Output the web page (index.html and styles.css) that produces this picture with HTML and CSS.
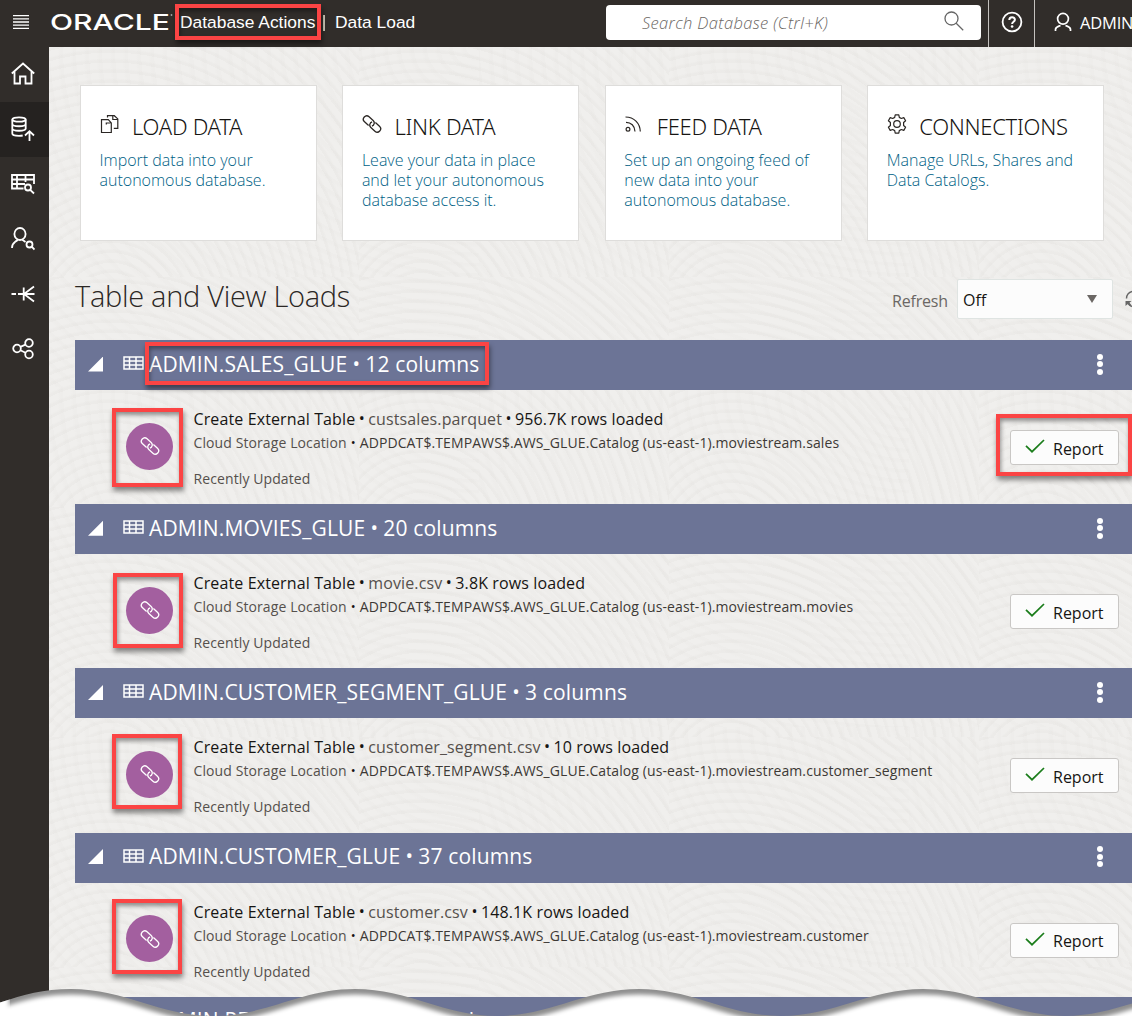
FILE: index.html
```
<!DOCTYPE html>
<html lang="en">
<head>
<meta charset="utf-8">
<title>Database Actions | Data Load</title>
<link rel="stylesheet" href="styles.css">
</head>
<body>
<svg width="0" height="0" class="defs" aria-hidden="true">
  <symbol id="link" viewBox="0 0 20 20"><g transform="rotate(42 10 10)" fill="none" stroke="currentColor" stroke-width="1.3"><path d="M8.500 13.400H3A3.400 3.400 0 0 1 3 6.600H8.500A3.400 3.400 0 0 1 11.400 11.700"/><path d="M11.500 6.600H17A3.400 3.400 0 0 1 17 13.400H11.500A3.400 3.400 0 0 1 8.600 8.300"/></g></symbol>
  <symbol id="table" viewBox="0 0 21 14"><path d="M1 1h19v12H1zM1 5h19M1 9h19M6.500 1v12M13 1v12" fill="none" stroke="currentColor" stroke-width="1.5"/></symbol>
  <symbol id="check" viewBox="0 0 20 14"><path d="M1 6.800 7 12.700 19 1" fill="none" stroke="currentColor" stroke-width="1.7"/></symbol>
</svg>
<div class="app">
  <header class="topbar">
    <svg class="menu" width="16" height="14" viewBox="0 0 16 14"><path d="M0 .7h16M0 3.800h16M0 7h16M0 10.200h16M0 13.300h16" stroke="#fff" stroke-width="1.3"/></svg>
    <svg class="logo" width="123" height="30" viewBox="0 0 123 30"><text x="-1" y="22.500" textLength="120" lengthAdjust="spacingAndGlyphs">ORACLE</text><circle cx="120.500" cy="8" r=".9"/></svg>
    <span class="product">Database Actions<span class="highlight h-product"></span></span>
    <span class="divider"></span>
    <span class="page">Data Load</span>
    <div class="search"><span>Search Database (Ctrl+K)</span>
      <svg width="20" height="20" viewBox="0 0 20 20"><g fill="none" stroke="#666" stroke-width="1.300"><circle cx="7.500" cy="7.500" r="6.500"/><path d="m12.200 12.200 7 7"/></g></svg>
    </div>
    <div class="help"><svg width="22" height="22" viewBox="0 0 22 22"><g fill="none" stroke="#fff" stroke-width="1.800"><circle cx="11" cy="11" r="9.400"/><path d="M8.300 9c0-3.600 5.600-3.600 5.600-.3 0 2-2.800 2-2.800 4.200" stroke-width="2"/></g><circle cx="11.100" cy="15.500" r="1.300" fill="#fff"/></svg></div>
    <div class="user"><svg width="18" height="20" viewBox="0 0 18 20"><g fill="none" stroke="#fff" stroke-width="1.700"><circle cx="9" cy="6.800" r="5.400"/><path d="M1.500 19v-1.500c0-2.500 2.500-3 5-4M16.500 19v-1.500c0-2.500-2.500-3-5-4"/></g></svg><span>ADMIN</span></div>
  </header>
  <div class="shell">
    <nav class="rail">
      <div class="item"><svg width="24" height="24" viewBox="0 0 24 24"><path d="M.8 11.500 12 1.500l11.200 10M3.500 9.500v12H9v-7h5.500v7h6v-12"/></svg></div>
      <div class="item active"><svg width="24" height="26" viewBox="0 0 24 26"><ellipse cx="8" cy="3.500" rx="6.700" ry="2.200"/><path d="M1.300 3.500v14c0 1.400 2.500 2.300 6.700 2.300 1.500 0 2.700-.1 3.700-.3M14.700 3.500V13M1.300 8c0 3 13.400 3 13.400 0M1.300 12.500c0 3 13.400 3 13.400 0M18.500 25v-9M14 19.500l4.500-4.300 4.500 4.300"/></svg></div>
      <div class="item"><svg width="24" height="22" viewBox="0 0 24 22"><path d="M12.500 15.500H1V2h22v9M1 6.500h22M1 11h13M6 2v13.500M14.500 2v7"/><circle cx="17" cy="14.500" r="3"/><path d="m19.200 16.800 3.800 3.700"/></svg></div>
      <div class="item"><svg width="24" height="24" viewBox="0 0 24 24"><ellipse cx="9" cy="7" rx="5.600" ry="6"/><path d="M1 21c0-5.500 2.500-5 6-8.500M11 12.500l3.500 2.500"/><circle cx="18.500" cy="17.500" r="3"/><path d="m20.700 19.700 2.800 2.800"/></svg></div>
      <div class="item"><svg width="24" height="18" viewBox="0 0 24 18"><path d="M.5 9H5M7 9h16.500M12.700 2.500v13M23 1.500 13 9l10 7.500"/></svg></div>
      <div class="item"><svg width="24" height="22" viewBox="0 0 24 22"><circle cx="6" cy="10.500" r="3.800"/><circle cx="18" cy="5" r="3.800"/><circle cx="18" cy="16.500" r="3.800"/><path d="m9.400 8.900 5.100-2.300M9.400 12.200l5.100 2.500"/></svg></div>
    </nav>
    <main class="main">
      <section class="cards">
        <article class="card"><h2><svg width="20" height="20" viewBox="0 0 20 20"><g fill="none" stroke="#2b2724" stroke-width="1.200"><path d="M1.500 5.700h6.800l3 3.200v9.600H1.500zM6.200 9h4.300M6.300 8.500v2"/><path d="M7.500 3.600V1.700h6.800l3.500 3.200v9.500h-4M12.800 2v3.500h4.600"/></g></svg>LOAD DATA</h2><p>Import data into your<br>autonomous database.</p></article>
        <article class="card"><h2><svg width="20" height="20"><use href="#link"/></svg>LINK DATA</h2><p>Leave your data in place<br>and let your autonomous<br>database access it.</p></article>
        <article class="card"><h2><svg width="20" height="20" viewBox="0 0 20 20"><g fill="none" stroke="#2b2724" stroke-width="1.200"><circle cx="4" cy="15.200" r="1.900"/><path d="M2 8.300c5 0 8.800 3.500 9 9.200M1.500 3C10 3 16 9 16.300 17.500"/></g></svg>FEED DATA</h2><p>Set up an ongoing feed of<br>new data into your<br>autonomous database.</p></article>
        <article class="card"><h2><svg width="20" height="20" viewBox="0 0 20 20"><g fill="none" stroke="#2b2724" stroke-width="1.200" stroke-linejoin="round"><circle cx="10" cy="10" r="3.300"/><path d="M8.200.8h3.600l.5 2.600 2 1.100 2.500-.9 1.800 3.100-2 1.800v3l2 1.800-1.800 3.100-2.500-.9-2 1.100-.5 2.600H8.200l-.5-2.600-2-1.100-2.500.9-1.800-3.100 2-1.800v-3l-2-1.800 1.800-3.100 2.500.9 2-1.100z"/></g></svg>CONNECTIONS</h2><p>Manage URLs, Shares and<br>Data Catalogs.</p></article>
      </section>
      <div class="heading">
        <h1>Table and View Loads</h1>
        <label>Refresh</label>
        <div class="select">Off<i></i></div>
        <svg class="reload" width="18" height="18" viewBox="0 0 18 18"><path d="M1.500 8.500a7.500 7.500 0 0 1 14-3.500M16.500 9.500a7.500 7.500 0 0 1-13.500 4" fill="none" stroke="#666" stroke-width="1.400"/><path d="M.5 11h6l-2 1.800 2 2.500-1.200 1.200-2.200-2.700L.5 16z" fill="#666"/></svg>
      </div>
      <section class="load">
        <header><i class="caret"></i><svg width="21" height="14"><use href="#table"/></svg><h3>ADMIN.SALES_GLUE<b>•</b>12 columns</h3><span class="highlight h-title"></span><span class="dots"><i></i><i></i><i></i></span></header>
        <div class="body"><div class="badge"><svg width="20" height="20"><use href="#link"/></svg><span class="highlight h-badge first"></span></div>
          <div class="info"><p class="main-line">Create External Table<b>•</b><em>custsales.parquet</em><b>•</b>956.7K rows loaded</p><p class="sub">Cloud Storage Location<b>•</b><strong>ADPDCAT$.TEMPAWS$.AWS_GLUE.Catalog (us-east-1).moviestream.sales</strong></p><p class="recent">Recently Updated</p></div>
          <button class="report"><svg width="20" height="14"><use href="#check"/></svg>Report<span class="highlight h-report"></span></button></div>
      </section>
      <section class="load">
        <header><i class="caret"></i><svg width="21" height="14"><use href="#table"/></svg><h3>ADMIN.MOVIES_GLUE<b>•</b>20 columns</h3><span class="dots"><i></i><i></i><i></i></span></header>
        <div class="body"><div class="badge"><svg width="20" height="20"><use href="#link"/></svg><span class="highlight h-badge second"></span></div>
          <div class="info"><p class="main-line">Create External Table<b>•</b><em>movie.csv</em><b>•</b>3.8K rows loaded</p><p class="sub">Cloud Storage Location<b>•</b><strong>ADPDCAT$.TEMPAWS$.AWS_GLUE.Catalog (us-east-1).moviestream.movies</strong></p><p class="recent">Recently Updated</p></div>
          <button class="report"><svg width="20" height="14"><use href="#check"/></svg>Report</button></div>
      </section>
      <section class="load">
        <header><i class="caret"></i><svg width="21" height="14"><use href="#table"/></svg><h3>ADMIN.CUSTOMER_SEGMENT_GLUE<b>•</b>3 columns</h3><span class="dots"><i></i><i></i><i></i></span></header>
        <div class="body"><div class="badge"><svg width="20" height="20"><use href="#link"/></svg><span class="highlight h-badge"></span></div>
          <div class="info"><p class="main-line">Create External Table<b>•</b><em>customer_segment.csv</em><b>•</b>10 rows loaded</p><p class="sub">Cloud Storage Location<b>•</b><strong>ADPDCAT$.TEMPAWS$.AWS_GLUE.Catalog (us-east-1).moviestream.customer_segment</strong></p><p class="recent">Recently Updated</p></div>
          <button class="report"><svg width="20" height="14"><use href="#check"/></svg>Report</button></div>
      </section>
      <section class="load">
        <header><i class="caret"></i><svg width="21" height="14"><use href="#table"/></svg><h3>ADMIN.CUSTOMER_GLUE<b>•</b>37 columns</h3><span class="dots"><i></i><i></i><i></i></span></header>
        <div class="body"><div class="badge"><svg width="20" height="20"><use href="#link"/></svg><span class="highlight h-badge"></span></div>
          <div class="info"><p class="main-line">Create External Table<b>•</b><em>customer.csv</em><b>•</b>148.1K rows loaded</p><p class="sub">Cloud Storage Location<b>•</b><strong>ADPDCAT$.TEMPAWS$.AWS_GLUE.Catalog (us-east-1).moviestream.customer</strong></p><p class="recent">Recently Updated</p></div>
          <button class="report"><svg width="20" height="14"><use href="#check"/></svg>Report</button></div>
      </section>
      <section class="load">
        <header><i class="caret"></i><svg width="21" height="14"><use href="#table"/></svg><h3>ADMIN.PERFORMER_GLUE<b>•</b>8 columns</h3></header>
      </section>
    </main>
  </div>
  <svg class="tear" width="1132" height="36" viewBox="0 0 1132 36">
    <defs>
      <path id="wave" d="M-8 25C20 16 40 9 71 9C125 9 160 36 213 36C266 36 301 9 355 9C409 9 444 36 497 36C550 36 585 9 639 9C693 9 728 36 781 36C834 36 869 9 923 9C977 9 1012 36 1065 36C1118 36 1153 9 1207 9V60H-8Z"/>
      <clipPath id="edge"><use href="#wave"/></clipPath>
      <filter id="soft" x="-5%" y="-50%" width="110%" height="200%"><feGaussianBlur stdDeviation="2"/></filter>
    </defs>
    <g clip-path="url(#edge)"><rect width="1132" height="36" fill="#8e8e8e"/><use href="#wave" y="6" fill="#fff" stroke="#fff" stroke-width="1" filter="url(#soft)"/><path d="M-6 0H9V60H-6Z" fill="#fff" filter="url(#soft)"/></g>
  </svg>
</div>
</body>
</html>
```
FILE: styles.css
```
* { box-sizing: border-box; }
body { margin: 0; background: #fff; font-family: "Open Sans", "Noto Sans", sans-serif; color: #161513; }
h1, h2, h3, p { margin: 0; font-weight: 400; }
svg { display: block; flex: none; }
.defs { position: absolute; }
.app { position: relative; width: 1132px; height: 1016px; overflow: hidden; }

.topbar { display: flex; align-items: center; height: 47px; padding-left: 13px; background: #312d2a; color: #fff; font: 17.400px "Liberation Sans", Arial, sans-serif; white-space: nowrap; }
.topbar .menu { margin: -3px 22px 0 0; }
.topbar > * { flex: none; }
.logo { margin-top: -3px; overflow: visible; }
.logo text { font: 500 22px Inter, sans-serif; fill: #fff; }
.logo circle { fill: #aaa; }
.product { position: relative; width: 137px; margin: -3px 0 0 6px; }
.divider { width: 2px; height: 16px; margin: -1px 10px 0 6px; background: #c9c4b4; }
.page { width: 82px; margin-top: -3px; }
.search { display: flex; align-items: center; justify-content: space-between; width: 375px; height: 35px; margin: -2px 0 0 189px; padding: 0 17px 0 36px; border-radius: 4px; background: #fff; color: #6b6764; font: italic 300 16.500px "Open Sans", sans-serif; letter-spacing: .35px; }
.search svg { margin-top: -4px; }
.help { display: flex; align-items: center; justify-content: center; width: 47px; height: 47px; margin-left: 7px; padding-bottom: 3px; border: solid #c4c1be; border-width: 0 1px; }
.user { display: flex; align-items: center; gap: 8px; padding: 0 0 3px 19px; font: 16.500px "Open Sans", sans-serif; letter-spacing: -.2px; }

.shell { display: flex; height: 969px; }
.rail { flex: none; width: 49px; background: #312d2a; }
.item { display: flex; align-items: center; height: 55px; padding: 0 0 1px 10.500px; }
.item.active { background: #252220; }
.item svg { fill: none; stroke: #fff; stroke-width: 1.800; }

.main { flex: none; width: 1083px; padding: 38px 0 0 26px; background: #f0efed;
  background-image:
    repeating-radial-gradient(ellipse at 20% 120%, rgba(90,80,65,.022) 0 2px, transparent 4px 9px),
    repeating-radial-gradient(ellipse at 100% 0, rgba(90,80,65,.012) 0 3px, transparent 6px 13px);
  background-size: 310px 230px, 430px 340px; }
.cards { display: grid; grid-template-columns: repeat(4, 237px); gap: 25.400px; margin-left: 5px; }
.card { height: 156px; padding: 26px 0 0 18.500px; border: 1px solid #dedddb; background: #fff; }
.card h2 { display: flex; gap: 12.500px; font: 300 22px/28px "Noto Sans", sans-serif; letter-spacing: -.280px; color: #161513; white-space: nowrap; }
.card h2 svg { margin-top: 2px; color: #2b2724; }
.card p { margin-top: 10px; font-weight: 300; font-size: 16px; line-height: 20px; color: #005f85; white-space: nowrap; }
.heading { display: flex; align-items: center; height: 38px; margin: 39px 0 22px; }
.heading > * { flex: none; }
.heading h1 { width: 817px; padding-bottom: 6px; font-weight: 300; font-size: 29px; line-height: 32px; letter-spacing: -.290px; color: #2b2724; }
.heading label { width: 65px; padding-top: 3px; font-size: 16px; letter-spacing: -.2px; color: #6b6764; }
.select { display: flex; align-items: center; justify-content: space-between; width: 156px; height: 40px; padding: 2px 15px 0 5px; border: 1px solid #dfe4e2; border-radius: 2px; background: #fcfcfc; font-size: 16px; }
.select i { margin-bottom: 2px; border: solid transparent; border-width: 8px 5.500px 0; border-top-color: #6b6764; }
.reload { margin-left: 12px; }

.load header { position: relative; display: flex; align-items: center; height: 50px; padding: 0 29px 2px 13px; background: #6c7496; color: #fff; }
.load header svg { margin: -2px 5px 0 20px; }
.caret { width: 15px; height: 15px; background: #fff; clip-path: polygon(100% 0, 100% 100%, 0 100%); }
.load h3 { flex: 1; margin-top: -1px; font-size: 21px; letter-spacing: .15px; white-space: nowrap; }
.load b { display: inline-block; width: 13px; font-weight: 400; font-size: 16px; line-height: 16px; text-align: center; letter-spacing: 0; vertical-align: 1px; color: #161513; }
.load h3 b { width: 18px; font-size: 20px; line-height: 20px; color: #fff; }
.dots { display: flex; flex-direction: column; gap: 1.500px; }
.dots i { width: 6px; height: 6px; border-radius: 50%; background: #fff; }
.body { position: relative; display: flex; height: 114.200px; padding: 17px 13px 0 51px; }
.badge { position: relative; display: flex; align-items: center; justify-content: center; width: 47px; height: 47px; margin-top: 15.500px; border-radius: 50%; background: #a35f9f; color: #fff; }
.info { flex: 1; padding-left: 20.500px; white-space: nowrap; }
.info p { line-height: 24px; }
.main-line { font-size: 16px; letter-spacing: .12px; }
.main-line em { font-style: normal; color: #55504c; }
.sub, .recent { font-size: 14px; letter-spacing: .1px; color: #55504c; }
.sub b { width: 13px; font-size: 13px; }
.sub strong { font-weight: 400; color: #3d3935; }
.recent { margin-top: 12px; }
.report { position: relative; display: flex; align-items: center; gap: 8px; width: 109px; height: 35px; margin-top: 23px; padding: 2px 0 0 14px; border: 1px solid #c9c7c5; border-radius: 3px; background: #fcfcfc; font: 16px "Open Sans", sans-serif; color: #161513; }
.report svg { margin-top: -5px; color: #1b7d1b; }

.highlight { position: absolute; z-index: 1; border: 4px solid #fb4444; box-shadow: 1px 4px 5px rgba(0,0,0,.45), inset 1px 3px 4px rgba(0,0,0,.4); }
.h-product { left: -5px; top: -8px; width: 146px; height: 36px; }
.h-title { left: 70px; top: 2px; width: 344px; height: 43px; }
.h-badge { left: -14px; top: -16.500px; width: 70px; height: 75px; }
.h-badge.first { top: -14.500px; width: 71px; height: 79px; }
.h-badge.second { left: -13px; top: -13.500px; }
.h-report { left: -15px; top: -17px; width: 136px; height: 62px; }
.tear { position: absolute; left: 0; bottom: 0; z-index: 2; }
```
